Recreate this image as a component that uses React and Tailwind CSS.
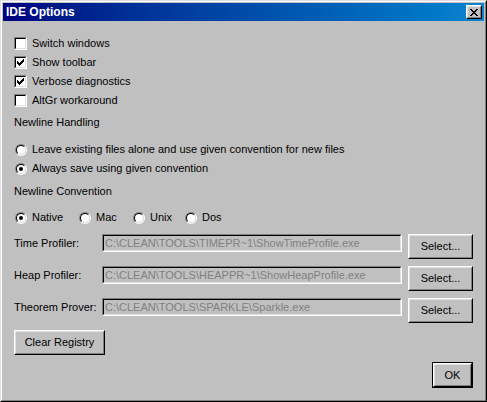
import React from 'react';

// Classic Win9x "IDE Options" dialog.

const font = { fontFamily: "'Liberation Sans', Arial, sans-serif" };

const CHECK = ['......#', '.....##', '#...###', '##.###.', '#####..', '.###...', '..#....'];
const CLOSE = ['##....##', '.##..##.', '..####..', '...##...', '..####..', '.##..##.', '##....##'];

function Pixels({ rows, w, h }) {
  return (
    <svg width={w} height={h} viewBox={`0 0 ${w} ${h}`} shapeRendering="crispEdges">
      {rows.flatMap((r, y) => r.split('').map((c, x) => (c === '#' ? <rect key={`${x}-${y}`} x={x} y={y} width="1" height="1" fill="#000" /> : null)))}
    </svg>
  );
}

function Raised({ className = '', children }) {
  return (
    <div className={`border border-t-white border-l-white border-r-black border-b-black ${className}`}>
      <div className="flex h-full w-full items-center justify-center border border-t-[#dfdfdf] border-l-[#dfdfdf] border-r-[#808080] border-b-[#808080] bg-[#c0c0c0]">
        {children}
      </div>
    </div>
  );
}

function Checkbox({ label, checked }) {
  return (
    <div className="flex h-[19px] items-center">
      <div className="h-[13px] w-[13px] border border-t-[#808080] border-l-[#808080] border-r-white border-b-white">
        <div className="h-full w-full border border-t-black border-l-black border-r-[#dfdfdf] border-b-[#dfdfdf] bg-white p-px">
          {checked ? <Pixels rows={CHECK} w={7} h={7} /> : null}
        </div>
      </div>
      <span className="ml-[5px]">{label}</span>
    </div>
  );
}

function Radio({ label, checked, className = '' }) {
  return (
    <div className={`flex h-[19px] items-center ${className}`}>
      <div className="ml-px h-[12px] w-[12px] rounded-full border border-t-[#808080] border-l-[#808080] border-r-white border-b-white">
        <div className="flex h-full w-full items-center justify-center rounded-full border border-t-black border-l-black border-r-[#dfdfdf] border-b-[#dfdfdf] bg-white">
          {checked ? <div className="h-[4px] w-[4px] rounded-full bg-black" /> : null}
        </div>
      </div>
      <span className="ml-[5px]">{label}</span>
    </div>
  );
}

function PathRow({ label, path }) {
  return (
    <div className="mt-[7px] flex h-[25px] items-start">
      <div className="flex h-[18px] w-[88px] items-center">{label}</div>
      <div className="h-[18px] w-[300px] border border-t-[#808080] border-l-[#808080] border-r-white border-b-white">
        <div className="flex h-full items-center overflow-hidden whitespace-nowrap border border-t-black border-l-black border-r-[#dfdfdf] border-b-[#dfdfdf] bg-[#c0c0c0] pl-[1px] text-[#808080]">
          {path}
        </div>
      </div>
      <Raised className="ml-[6px] h-[25px] w-[65px]">Select...</Raised>
    </div>
  );
}

export default function App() {
  return (
    <div style={font} className="h-[402px] w-[487px] border border-t-[#dfdfdf] border-l-[#dfdfdf] border-r-black border-b-black bg-[#c0c0c0] text-[11px] leading-[13px] text-black">
      <div className="flex h-full flex-col border border-t-white border-l-white border-r-[#808080] border-b-[#808080] p-px">
        <div className="flex h-[18px] items-center justify-between bg-gradient-to-r from-[#000080] to-[#1084d0] pl-[3px] pr-[2px]">
          <span className="text-[12px] font-bold text-white">IDE Options</span>
          <Raised className="h-[14px] w-[16px]">
            <Pixels rows={CLOSE} w={8} h={7} />
          </Raised>
        </div>

        <div className="flex flex-1 flex-col px-[11px] pt-[13px]">
          <Checkbox label="Switch windows" />
          <Checkbox label="Show toolbar" checked />
          <Checkbox label="Verbose diagnostics" checked />
          <Checkbox label="AltGr workaround" />

          <div className="mt-[3px] flex h-[19px] items-center">Newline Handling</div>
          <div className="mt-[8px]">
            <Radio label="Leave existing files alone and use given convention for new files" />
            <Radio label="Always save using given convention" checked />
          </div>

          <div className="mt-[4px] flex h-[19px] items-center">Newline Convention</div>
          <div className="mt-[7px] flex">
            <Radio label="Native" checked className="w-[64px]" />
            <Radio label="Mac" className="w-[54px]" />
            <Radio label="Unix" className="w-[52px]" />
            <Radio label="Dos" />
          </div>

          <PathRow label="Time Profiler:" path="C:\CLEAN\TOOLS\TIMEPR~1\ShowTimeProfile.exe" />
          <PathRow label="Heap Profiler:" path="C:\CLEAN\TOOLS\HEAPPR~1\ShowHeapProfile.exe" />
          <PathRow label="Theorem Prover:" path="C:\CLEAN\TOOLS\SPARKLE\Sparkle.exe" />

          <Raised className="mt-[7px] h-[25px] w-[91px]">Clear Registry</Raised>

          <div className="mt-[7px] flex justify-end">
            <div className="h-[26px] w-[41px] border border-black">
              <Raised className="h-full w-full">OK</Raised>
            </div>
          </div>
        </div>
      </div>
    </div>
  );
}
